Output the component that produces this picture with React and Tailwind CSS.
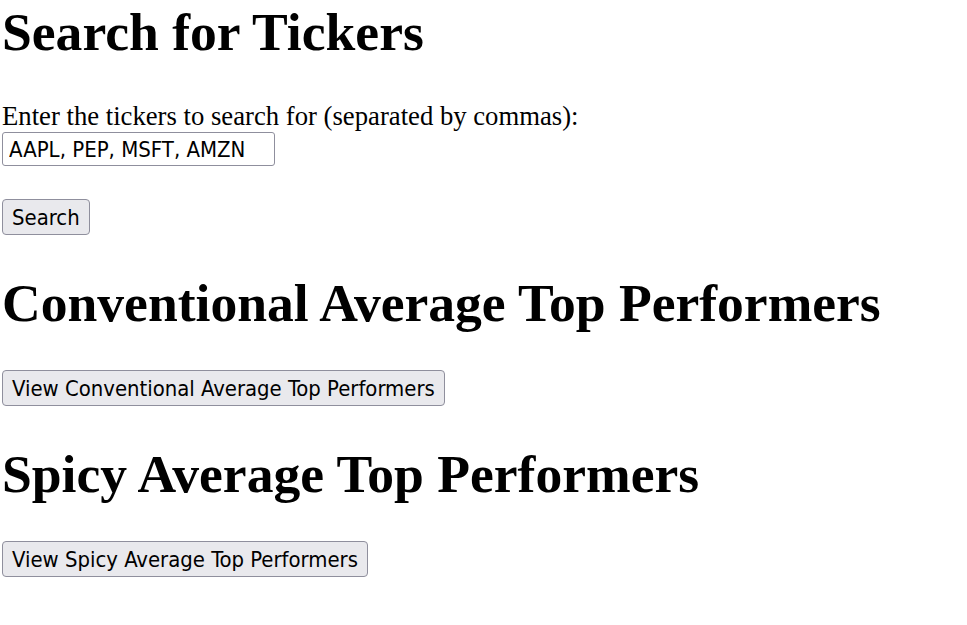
export default function App() {
  const serif = "[font-family:'Liberation_Serif','Times_New_Roman',serif]";
  const ui = "[font-family:'DejaVu_Sans_Condensed','DejaVu_Sans',Tahoma,sans-serif]";
  const btn = `${ui} block h-[36px] rounded-[4px] border border-[#8f8f9d] bg-[#e9e9ed] px-[9px] pt-[2px] text-[21.9px] leading-none`;

  return (
    <div className="min-h-screen bg-white pl-[2px] text-black">
      <h1 className={`${serif} mt-[6px] text-[53.6px] font-bold leading-[53px]`}>Search for Tickers</h1>

      <form onSubmit={(e) => e.preventDefault()}>
        <label htmlFor="tickers" className={`${serif} mt-[42px] block text-[26.7px] leading-[30px]`}>
          Enter the tickers to search for (separated by commas):
        </label>
        <input
          id="tickers"
          type="text"
          defaultValue="AAPL, PEP, MSFT, AMZN"
          className={`${ui} mt-[1px] block h-[34px] w-[273px] rounded-[3px] border border-[#8f8f9d] px-[6px] pt-[1px] text-[22px] outline-none`}
        />
        <button type="submit" className={`${btn} mt-[33px]`}>
          Search
        </button>
      </form>

      <h1 className={`${serif} mt-[42px] text-[53.6px] font-bold leading-[53px]`}>Conventional Average Top Performers</h1>
      <button className={`${btn} mt-[40px]`}>View Conventional Average Top Performers</button>

      <h1 className={`${serif} mt-[42px] text-[53.6px] font-bold leading-[53px]`}>Spicy Average Top Performers</h1>
      <button className={`${btn} mt-[40px]`}>View Spicy Average Top Performers</button>
    </div>
  );
}
